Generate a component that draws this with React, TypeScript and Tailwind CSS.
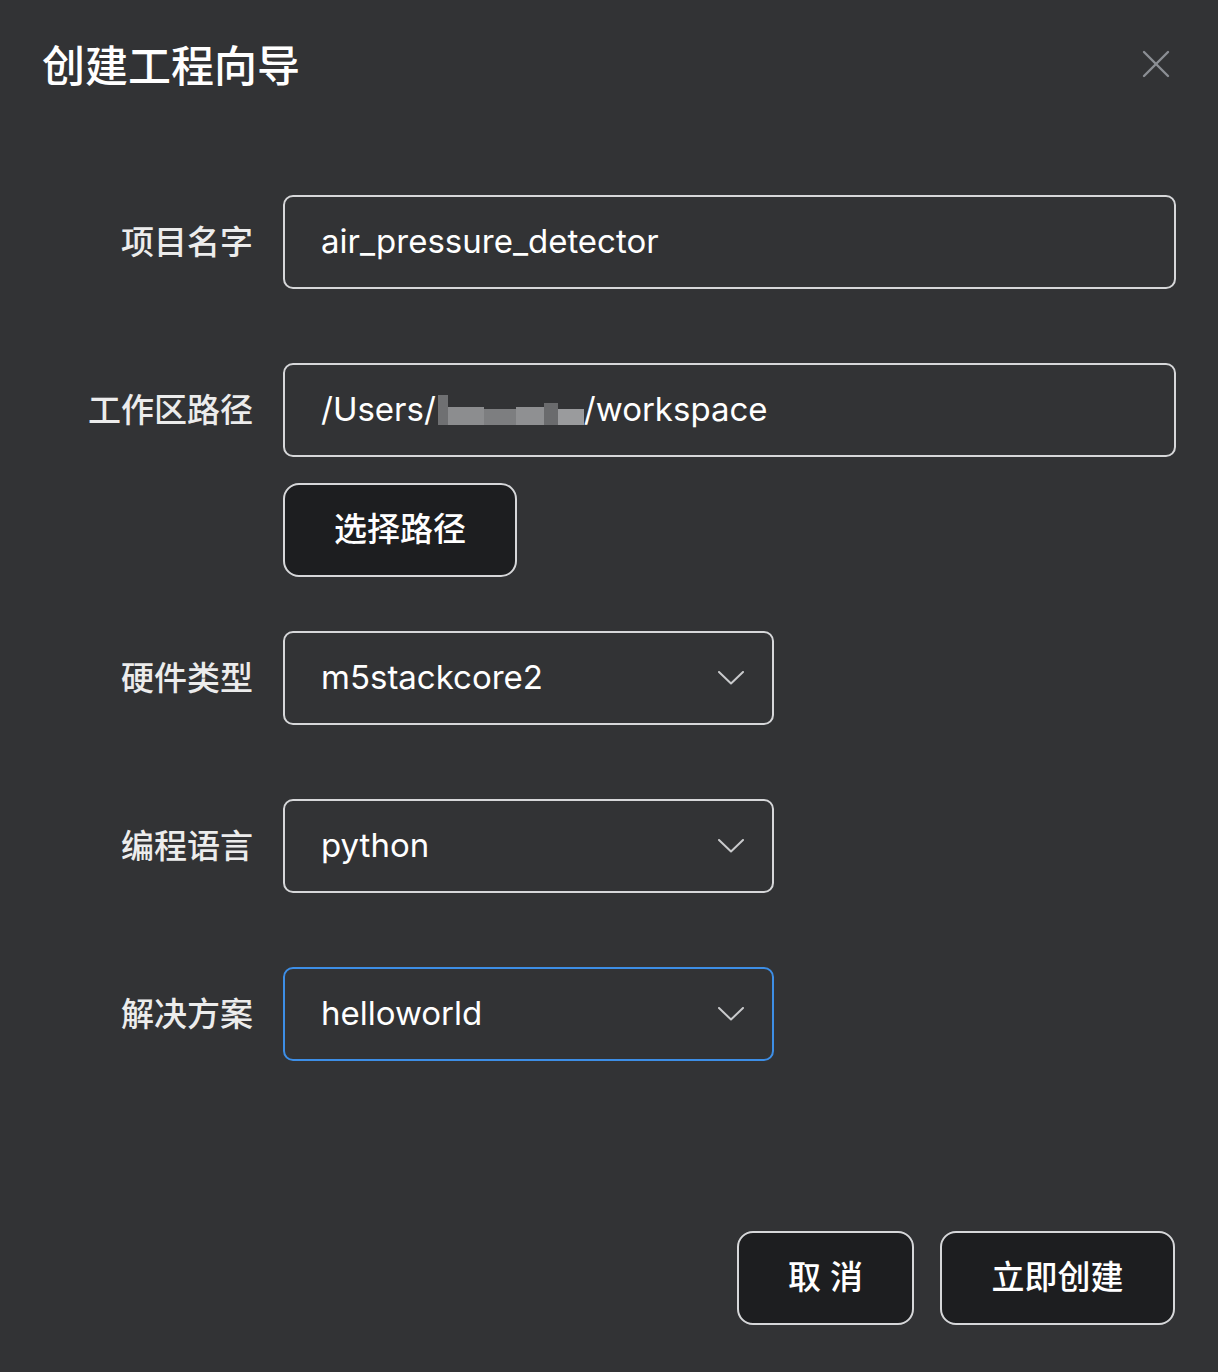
import { X } from 'lucide-react'

const font = "font-[Inter,'Noto_Sans_CJK_SC',sans-serif]"

function Chevron() {
  return (
    <svg width="26" height="14" viewBox="0 0 26 14" fill="none" className="shrink-0">
      <polyline points="1,1 13,12.5 25,1" stroke="#c9cacc" strokeWidth="2" strokeLinecap="round" strokeLinejoin="round" />
    </svg>
  )
}

function Label({ text }: { text: string }) {
  return (
    <div className="w-[283px] shrink-0 pr-[30px] text-right text-[33px] leading-none font-medium text-[#ececec]">{text}</div>
  )
}

function Select({ value, active }: { value: string; active?: boolean }) {
  return (
    <div
      className={`flex h-[94px] w-[491px] items-center justify-between rounded-[10px] border-2 pl-[36px] pr-[28px] text-[33px] text-white ${
        active ? 'border-[#3d8ee6]' : 'border-[#d6d7d9]'
      }`}
    >
      <span>{value}</span>
      <Chevron />
    </div>
  )
}

export default function App() {
  return (
    <div className={`flex h-[1372px] w-[1218px] flex-col bg-[#323335] ${font}`}>
      {/* header */}
      <div className="mt-[45px] flex h-[42px] items-center justify-between pl-[42px] pr-[38px]">
        <h1 className="text-[43px] leading-none font-medium text-white">创建工程向导</h1>
        <X className="-mt-[4px] h-[48px] w-[48px] text-[#8b8e94]" strokeWidth={1.2} />
      </div>

      {/* form */}
      <div className="mt-[108px] flex flex-col">
        <div className="flex items-center">
          <Label text="项目名字" />
          <div className="flex h-[94px] w-[893px] items-center rounded-[10px] border-2 border-[#d6d7d9] pl-[36px] text-[33px] text-white">
            air_pressure_detector
          </div>
        </div>

        <div className="mt-[74px] flex items-center">
          <Label text="工作区路径" />
          <div className="flex h-[94px] w-[893px] items-center rounded-[10px] border-2 border-[#d6d7d9] pl-[36px] text-[33px] text-white">
            <span>/Users/</span>
            <span className="ml-[2px] flex h-[30px] items-end">
              <span className="h-[30px] w-[10px] bg-[#6f7072]" />
              <span className="h-[18px] w-[36px] bg-[#8c8d8f]" />
              <span className="h-[16px] w-[32px] bg-[#7d7e80]" />
              <span className="h-[18px] w-[28px] bg-[#8f9092]" />
              <span className="h-[22px] w-[14px] bg-[#6a6b6d]" />
              <span className="h-[16px] w-[26px] bg-[#9a9b9d]" />
            </span>
            <span>/workspace</span>
          </div>
        </div>

        <div className="mt-[26px] pl-[283px]">
          <button className="flex h-[94px] w-[234px] items-center justify-center rounded-[16px] border-2 border-[#d6d7d9] bg-[#1d1e20] text-[33px] font-medium text-white">
            选择路径
          </button>
        </div>

        <div className="mt-[54px] flex items-center">
          <Label text="硬件类型" />
          <Select value="m5stackcore2" />
        </div>

        <div className="mt-[74px] flex items-center">
          <Label text="编程语言" />
          <Select value="python" />
        </div>

        <div className="mt-[74px] flex items-center">
          <Label text="解决方案" />
          <Select value="helloworld" active />
        </div>
      </div>

      {/* footer */}
      <div className="mt-[170px] flex justify-end gap-[26px] pr-[43px]">
        <button className="flex h-[94px] w-[177px] items-center justify-center rounded-[16px] border-2 border-[#d6d7d9] bg-[#1d1e20] text-[33px] font-medium text-white">
          取 消
        </button>
        <button className="flex h-[94px] w-[235px] items-center justify-center rounded-[16px] border-2 border-[#d6d7d9] bg-[#1d1e20] text-[33px] font-medium text-white">
          立即创建
        </button>
      </div>
    </div>
  )
}
